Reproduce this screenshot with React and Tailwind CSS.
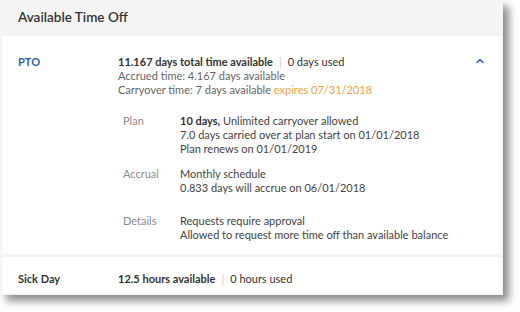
import { ChevronUp } from "lucide-react";

const font = { fontFamily: "Lato, 'Open Sans', Arial, sans-serif" };

function DetailRow({ label, children }) {
  return (
    <div className="flex">
      <div className="w-[57px] shrink-0 text-[#8a8a8a]">{label}</div>
      <div className="text-[#444]">{children}</div>
    </div>
  );
}

export default function App() {
  return (
    <div className="h-[312px] w-[520px] bg-white" style={font}>
      <div className="w-[503px] bg-[#f4f4f4] px-[2px] pb-[2px] shadow-[6px_6px_8px_rgba(0,0,0,0.45)]">
        <div className="flex h-[36px] items-center pl-4 pb-[2px] text-[13.5px] font-semibold text-[#333]">
          Available Time Off
        </div>

        <div className="flex flex-col gap-[3px]">
          {/* PTO */}
          <div className="relative flex bg-white pb-[12px] pl-4 pt-[19px] text-[11px] leading-[14px]">
            <div className="w-[100px] shrink-0 font-bold text-[#2c5ea8]">PTO</div>
            <div className="flex flex-col">
              <div className="text-[#333]">
                <span className="font-bold">11.167 days total time available</span>
                <span className="mx-[6px] text-[#ccc]">|</span>
                <span>0 days used</span>
              </div>
              <div className="text-[#666]">Accrued time: 4.167 days available</div>
              <div className="text-[#666]">
                Carryover time: 7 days available <span className="text-[#f0a040]">expires 07/31/2018</span>
              </div>

              <div className="mt-[17px] flex flex-col pl-[5px]">
                <DetailRow label="Plan">
                  <div>
                    <span className="font-bold text-[#333]">10 days,</span> Unlimited carryover allowed
                  </div>
                  <div>7.0 days carried over at plan start on 01/01/2018</div>
                  <div>Plan renews on 01/01/2019</div>
                </DetailRow>
                <div className="mt-[11px]">
                  <DetailRow label="Accrual">
                    <div>Monthly schedule</div>
                    <div>0.833 days will accrue on 06/01/2018</div>
                  </DetailRow>
                </div>
                <div className="mt-[19px]">
                  <DetailRow label="Details">
                    <div>Requests require approval</div>
                    <div>Allowed to request more time off than available balance</div>
                  </DetailRow>
                </div>
              </div>
            </div>
            <ChevronUp className="absolute right-[15px] top-[19px] text-[#2c5ea8]" size={12} strokeWidth={3} />
          </div>

          {/* Sick Day */}
          <div className="flex h-[36px] bg-white pl-4 pt-[15px] text-[11px] leading-[14px]">
            <div className="w-[100px] shrink-0 font-bold text-[#333]">Sick Day</div>
            <div className="text-[#333]">
              <span className="font-bold">12.5 hours available</span>
              <span className="mx-[6px] text-[#ccc]">|</span>
              <span>0 hours used</span>
            </div>
          </div>
        </div>
      </div>
    </div>
  );
}
